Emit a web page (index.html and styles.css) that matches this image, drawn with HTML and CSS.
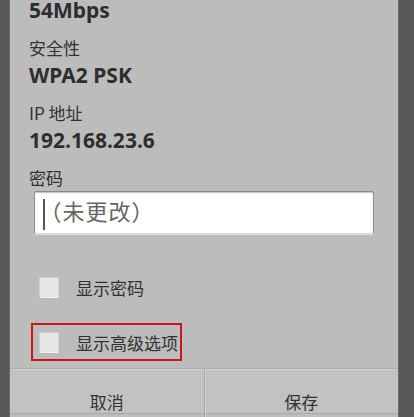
FILE: index.html
```html
<!DOCTYPE html>
<html lang="zh-CN">
<head>
<meta charset="utf-8">
<link rel="stylesheet" href="styles.css">
</head>
<body>
<div class="screen">
  <div class="dialog">
    <div class="info">
      <div class="value first">54Mbps</div>
      <div class="label">安全性</div>
      <div class="value">WPA2 PSK</div>
      <div class="label">IP 地址</div>
      <div class="value">192.168.23.6</div>
      <div class="label pw">密码</div>
    </div>
    <div class="input"><span class="placeholder"><span class="cursor"></span>（未更改）</span></div>
    <div class="checks">
      <div class="check"><span class="box"></span><span class="ctext">显示密码</span></div>
      <div class="check marked"><span class="box"></span><span class="ctext">显示高级选项</span></div>
    </div>
    <div class="buttons">
      <div class="btn">取消</div>
      <div class="btn">保存</div>
    </div>
  </div>
</div>
</body>
</html>
```
FILE: styles.css
```css
html, body {
  margin: 0;
  padding: 0;
  background: #575757;
  width: 414px;
  height: 417px;
  overflow: hidden;
}
.screen {
  display: flex;
  height: 417px;
  font-family: "Noto Sans", "Noto Sans CJK SC", sans-serif;
  color: #2e2e2e;
}
.dialog {
  margin-left: 9px;
  width: 390px;
  height: 417px;
  background: #bcbcbc;
  display: flex;
  flex-direction: column;
  border-left: 1px solid #6a6a6a;
  border-right: 1px solid #6a6a6a;
  box-sizing: border-box;
}
.info {
  padding-left: 19px;
  margin-top: -5px;
}
.value {
  font-weight: bold;
  font-size: 21px;
  line-height: 30px;
  height: 30px;
  margin-bottom: 10px;
}
.label {
  font-family: "Noto Sans CJK SC", sans-serif;
  font-size: 17px;
  line-height: 25px;
  height: 25px;
  color: #333;
}
.input {
  margin-left: 24px;
  margin-top: 1px;
  width: 340px;
  height: 43px;
  box-sizing: border-box;
  background: #fff;
  border: 1px solid #8a8a8a;
  border-bottom-color: #d4d4d4;
  border-radius: 2px;
  box-shadow: inset 0 1px 1px rgba(0,0,0,0.25), 0 1px 0 #e0e0e0;
  display: flex;
  align-items: center;
  padding-left: 8px;
}
.placeholder {
  font-family: "Noto Sans CJK SC", sans-serif;
  font-size: 22px;
  line-height: 31px;
  letter-spacing: 1px;
  color: #666;
  white-space: nowrap;
}
.cursor {
  display: inline-block;
  vertical-align: middle;
  width: 1.5px;
  height: 31px;
  background: #555;
  margin-right: -5px;
}
.checks {
  display: flex;
  flex-direction: column;
  align-items: flex-start;
  padding-left: 21px;
  margin-top: 34px;
  flex: 1;
}
.check {
  display: flex;
  align-items: center;
  height: 38px;
  padding-left: 6px;
  padding-right: 2px;
  box-sizing: border-box;
  border: 2px solid transparent;
}
.check.marked {
  margin-top: 17px;
  border-color: #cc1515;
}
.box {
  width: 20px;
  height: 21px;
  background: #e6e6e6;
  border: 1px solid #d0d0d0;
  border-bottom-color: #f2f2f2;
  border-radius: 2px;
  box-sizing: border-box;
}
.ctext {
  font-family: "Noto Sans CJK SC", sans-serif;
  font-size: 17px;
  margin-left: 17px;
  color: #333;
}
.buttons {
  display: flex;
  height: 49px;
  box-sizing: border-box;
  border-top: 1px solid #a8a8a8;
  box-shadow: inset 0 1px 0 #d0d0d0, inset 0 -3px 0 #bdbdbd, inset 0 -4px 0 #a9a9a9;
  background: #c2c2c2;
}
.btn {
  flex: 1;
  display: flex;
  align-items: flex-start;
  justify-content: center;
  font-family: "Noto Sans CJK SC", sans-serif;
  font-size: 17px;
  color: #333;
  padding-top: 20px;
}
.btn + .btn {
  border-left: 1px solid #a8a8a8;
  box-shadow: inset 1px 0 0 #d0d0d0;
}
```
